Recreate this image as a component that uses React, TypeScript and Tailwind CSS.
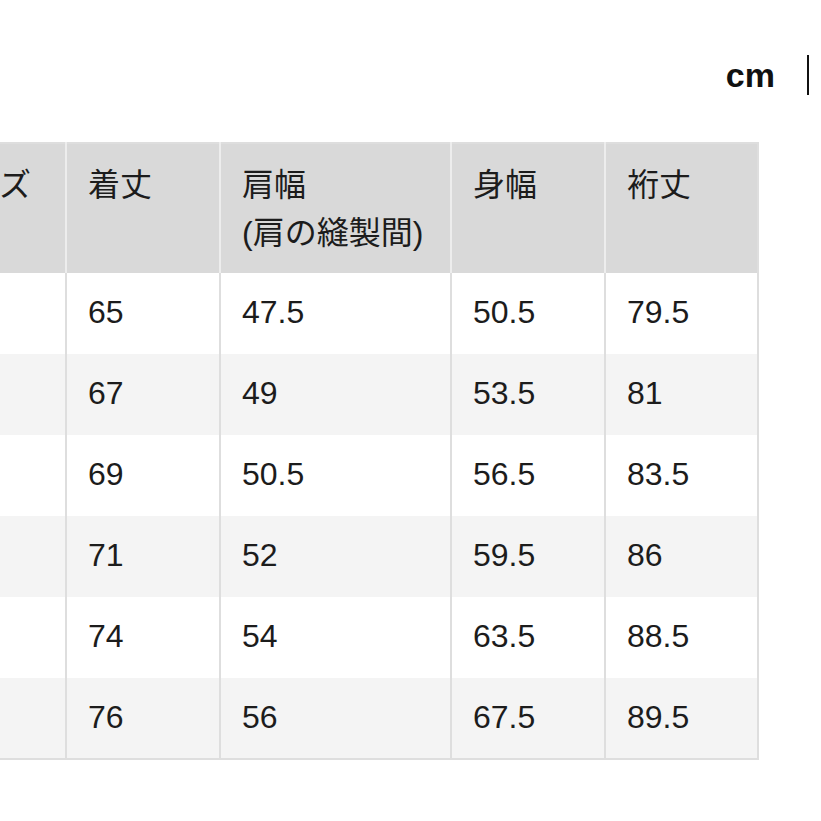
const headers = [["サイズ"], ["着丈"], ["肩幅", "(肩の縫製間)"], ["身幅"], ["裄丈"]];

const rows = [
  ["XS", "65", "47.5", "50.5", "79.5"],
  ["S", "67", "49", "53.5", "81"],
  ["M", "69", "50.5", "56.5", "83.5"],
  ["L", "71", "52", "59.5", "86"],
  ["XL", "74", "54", "63.5", "88.5"],
  ["XXL", "76", "56", "67.5", "89.5"],
];

const widths = ["w-[152px]", "w-[154px]", "w-[231px]", "w-[154px]", "w-[153px]"];

export default function App() {
  return (
    <div className="w-[821px] h-[821px] overflow-hidden bg-white text-[#1c1c1c] font-['Liberation_Sans','Noto_Sans_CJK_JP',sans-serif]">
      <div className="flex items-center justify-end h-[142px] pr-[12px] pt-[7px]">
        <span className="text-[34px] font-bold leading-none text-[#111]">cm</span>
        <span className="ml-[32px] w-[2px] h-[40px] bg-[#111]" />
      </div>
      <table className="ml-[-87px] table-fixed border-collapse border-2 border-[#dedede]">
        <colgroup>
          {widths.map((w, i) => (
            <col key={i} className={w} />
          ))}
        </colgroup>
        <thead>
          <tr className="h-[130px] bg-[#d9d9d9]">
            {headers.map((h, i) => (
              <th
                key={i}
                className="align-top text-left font-normal text-[32px] leading-[48px] pt-[17px] pl-[21px] border-r-2 border-[#ededed] last:border-[#dedede]"
              >
                {h.map((line, j) => (
                  <div key={j} className="whitespace-nowrap">{line}</div>
                ))}
              </th>
            ))}
          </tr>
        </thead>
        <tbody>
          {rows.map((r, i) => (
            <tr key={i} className={i % 2 === 0 ? "h-[81px] bg-white" : "h-[81px] bg-[#f4f4f4]"}>
              {r.map((c, j) => (
                <td key={j} className="text-[32px] leading-none pl-[21px] pb-[3px] align-middle border-r-2 border-[#dedede]">
                  {j === 0 ? "" : c}
                </td>
              ))}
            </tr>
          ))}
        </tbody>
      </table>
    </div>
  );
}
